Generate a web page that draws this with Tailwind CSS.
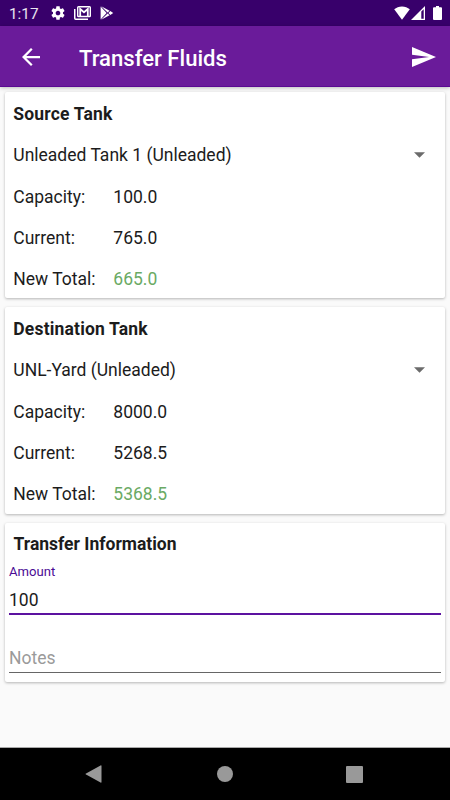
<!DOCTYPE html>
<html lang="en">
<head>
  <meta charset="utf-8">
  <meta name="viewport" content="width=device-width, initial-scale=1">
  <title>Transfer Fluids</title>
  <script src="https://cdn.jsdelivr.net/npm/@tailwindcss/browser@4"></script>
</head>
<body class="flex h-[800px] w-[450px] flex-col overflow-hidden bg-[#fafafa] font-['Roboto',sans-serif] text-[17.5px] text-[#1c1c1c]">

  <!-- Status bar -->
  <div class="flex h-[26px] shrink-0 items-center bg-[#38006b] pr-[8px] pl-[9px] text-white">
    <span class="w-[41px] pt-[2px] text-[15.3px] leading-[26px] text-white/90">1:17</span>
    <svg class="h-4 w-4" viewBox="0 0 24 24" fill="currentColor"><path d="M19.43 12.98c.04-.32.07-.64.07-.98s-.03-.66-.07-.98l2.11-1.65c.19-.15.24-.42.12-.64l-2-3.46c-.12-.22-.39-.3-.61-.22l-2.49 1c-.52-.4-1.08-.73-1.69-.98l-.38-2.65C14.46 2.18 14.25 2 14 2h-4c-.25 0-.46.18-.49.42l-.38 2.65c-.61.25-1.17.59-1.69.98l-2.49-1c-.23-.09-.49 0-.61.22l-2 3.46c-.13.22-.07.49.12.64l2.11 1.65c-.04.32-.07.65-.07.98s.03.66.07.98l-2.11 1.65c-.19.15-.24.42-.12.64l2 3.46c.12.22.39.3.61.22l2.49-1c.52.4 1.08.73 1.69.98l.38 2.65c.03.24.24.42.49.42h4c.25 0 .46-.18.49-.42l.38-2.65c.61-.25 1.17-.59 1.69-.98l2.49 1c.23.09.49 0 .61-.22l2-3.46c.12-.22.07-.49-.12-.64l-2.11-1.65zM12 15.500c-1.930 0-3.500-1.570-3.500-3.500s1.570-3.500 3.500-3.500 3.500 1.570 3.500 3.500-1.570 3.500-3.500 3.500z"/></svg>
    <svg class="ml-[8px] h-[14px] w-[17px]" viewBox="0 0 17 14" fill="none" stroke="currentColor">
      <path stroke-width="1.5" d="M.75 3v9.250a1 1 0 0 0 1 1H14"/>
      <rect x="3.700" y=".7" width="12.600" height="9.800" rx=".8" stroke-width="1.400"/>
      <path stroke-width="1.800" d="M6.200 10V3l3.800 3.200L13.800 3v7"/>
    </svg>
    <svg class="ml-[9px] h-[14px] w-[14px]" viewBox="0 0 14 14" fill="currentColor">
      <path d="M.6.500v13l6-6.500z"/>
      <path d="M1.200.2 9.600 4.700 7.600 6.500z"/>
      <path d="M1.200 13.800 9.600 9.300 7.600 7.500z"/>
      <path d="m10.300 5.100 2.900 1.900-2.900 1.900L8.400 7z"/>
    </svg>
    <div class="ml-auto flex items-center">
      <svg class="h-[14px] w-4" viewBox="0 0 16 14" fill="currentColor"><path d="M8 13.800.2 3.300C2.300 1.500 5 .4 8 .4s5.700 1.100 7.800 2.900z"/></svg>
      <svg class="ml-[1px] h-[14px] w-[14px]" viewBox="0 0 14 14"><path fill="currentColor" d="M14 0v14H0z"/><path fill="#38006b" d="M10.300 5.500 12.700 3.300v9.500h-2.400z"/></svg>
      <svg class="ml-[8px] h-[14px] w-[9px]" viewBox="0 0 9 14" fill="currentColor"><path d="M3 0h3v1.300h2a1 1 0 0 1 1 1V13a1 1 0 0 1-1 1H1a1 1 0 0 1-1-1V2.300a1 1 0 0 1 1-1h2z"/></svg>
    </div>
  </div>

  <!-- App bar -->
  <header class="flex h-[61px] shrink-0 items-center border-b border-[#5a0a92] bg-[#6a1b9a] pt-px pr-[14px] pl-[22px] text-white shadow-[0_1px_4px_rgba(0,0,0,0.25)]">
    <svg class="h-[18px] w-[18px]" viewBox="0 0 16 16" fill="currentColor"><path d="M16 7H3.830l5.590-5.590L8 0 0 8l8 8 1.410-1.410L3.830 9H16z"/></svg>
    <h1 class="ml-[39px] pt-[3px] text-[22.100px] leading-7 font-medium">Transfer Fluids</h1>
    <svg class="ml-auto h-5 w-6" viewBox="0 0 21 18" preserveAspectRatio="none" fill="currentColor"><path d="M.01 18 21 9 .01 0 0 7l15 2-15 2z"/></svg>
  </header>

  <main class="flex flex-1 flex-col gap-[9px] px-[5px] pt-[5px]">
    <section class="h-[206.300px] rounded-[2px] bg-white px-[8.300px] pt-px shadow-[0_1px_3px_rgba(0,0,0,0.28)]">
      <h2 class="h-[41.300px] leading-[42px] font-bold tracking-[0.01em]">Source Tank</h2>
      <div class="flex h-[41.300px] items-center justify-between pr-[12px] leading-[42px]">
        <span>Unleaded Tank 1 (Unleaded)</span>
        <svg class="h-[6px] w-[11px]" viewBox="0 0 10 5" fill="#6b6b6b"><path d="m0 0 5 5 5-5z"/></svg>
      </div>
      <dl class="grid auto-rows-[41.300px] grid-cols-[100px_1fr] leading-[42px]">
        <dt>Capacity:</dt><dd>100.0</dd>
        <dt>Current:</dt><dd>765.0</dd>
        <dt>New Total:</dt><dd class="text-[#6aaa64]">665.0</dd>
      </dl>
    </section>

    <section class="h-[206.300px] rounded-[2px] bg-white px-[8.300px] pt-px shadow-[0_1px_3px_rgba(0,0,0,0.28)]">
      <h2 class="h-[41.300px] leading-[42px] font-bold tracking-[0.01em]">Destination Tank</h2>
      <div class="flex h-[41.300px] items-center justify-between pr-[12px] leading-[42px]">
        <span>UNL-Yard (Unleaded)</span>
        <svg class="h-[6px] w-[11px]" viewBox="0 0 10 5" fill="#6b6b6b"><path d="m0 0 5 5 5-5z"/></svg>
      </div>
      <dl class="grid auto-rows-[41.300px] grid-cols-[100px_1fr] leading-[42px]">
        <dt>Capacity:</dt><dd>8000.0</dd>
        <dt>Current:</dt><dd>5268.5</dd>
        <dt>New Total:</dt><dd class="text-[#6aaa64]">5368.5</dd>
      </dl>
    </section>

    <section class="h-[159px] rounded-[2px] bg-white px-1 shadow-[0_1px_3px_rgba(0,0,0,0.28)]">
      <h2 class="h-10 pl-[4.500px] leading-[43px] font-bold">Transfer Information</h2>
      <label class="block h-[18px] text-[13.100px] leading-[18px] text-[#4a0a94]">Amount</label>
      <div class="h-[34px] border-b-2 border-[#5c12a0] leading-[38px]">100</div>
      <div class="mt-[27px] h-[31px] border-b border-[#666] leading-[32px] text-[#9a9a9a]">Notes</div>
    </section>
  </main>

  <!-- System navigation -->
  <nav class="flex h-[53px] shrink-0 items-center justify-between border-t border-[#a8a8a8] bg-black pr-[87px] pl-[85px] text-[#999]">
    <svg class="h-[18px] w-[17px]" viewBox="0 0 17 18" fill="currentColor"><path d="M16.500 1v16a.7.7 0 0 1-1 .6L1 9.600a.7.7 0 0 1 0-1.200L15.500.4a.7.7 0 0 1 1 .6z"/></svg>
    <div class="ml-[2px] h-4 w-4 rounded-full bg-[#999]"></div>
    <div class="h-[17px] w-[17px] rounded-[1px] bg-[#999]"></div>
  </nav>
</body>
</html>
